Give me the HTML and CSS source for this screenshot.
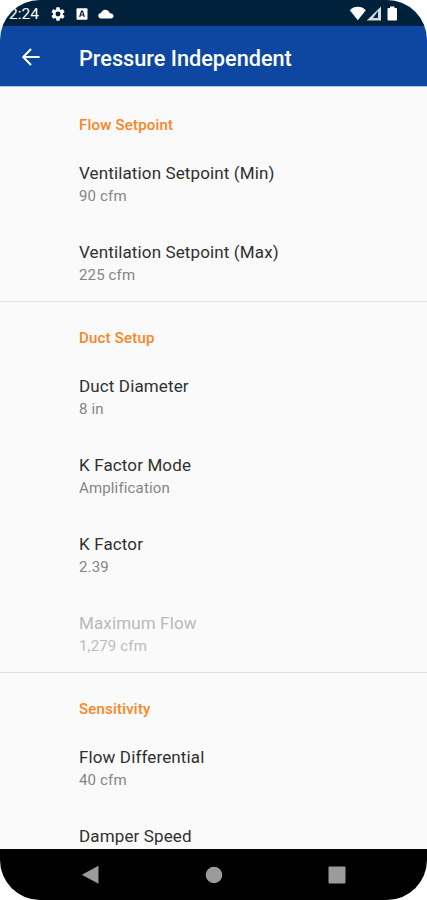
FILE: index.html
```html
<!DOCTYPE html>
<html lang="en">
<head>
<meta charset="utf-8">
<title>Pressure Independent</title>
<link rel="stylesheet" href="styles.css">
</head>
<body>
<div class="phone">
  <div class="status">
    <span class="clock">2:24</span>
    <svg class="gear" width="16" height="16" viewBox="0 0 24 24"><path fill="#fff" d="M19.43 12.98c.04-.32.07-.64.07-.98s-.03-.66-.07-.98l2.11-1.65c.19-.15.24-.42.12-.64l-2-3.46c-.12-.22-.39-.3-.61-.22l-2.49 1c-.52-.4-1.08-.73-1.69-.98l-.38-2.65A.49.49 0 0 0 14 2h-4c-.25 0-.46.18-.49.42l-.38 2.65c-.61.25-1.17.59-1.69.98l-2.49-1c-.23-.09-.49 0-.61.22l-2 3.46c-.13.22-.07.49.12.64l2.11 1.65c-.04.32-.07.65-.07.98s.03.66.07.98l-2.11 1.65c-.19.15-.24.42-.12.64l2 3.46c.12.22.39.3.61.22l2.49-1c.52.4 1.08.73 1.69.98l.38 2.65c.03.24.24.42.49.42h4c.25 0 .46-.18.49-.42l.38-2.65c.61-.25 1.17-.59 1.69-.98l2.49 1c.23.09.49 0 .61-.22l2-3.46c.12-.22.07-.49-.12-.64zM12 15.7a3.7 3.7 0 1 1 0-7.400 3.700 3.700 0 0 1 0 7.400z"/></svg>
    <svg class="keyboard" width="12" height="12" viewBox="0 0 12 12"><rect x=".5" y=".3" width="11" height="11.400" rx="1" fill="#fff"/><path d="M3.700 9 5.500 3.200h1L8.300 9M4.500 7h3" fill="none" stroke="#00213c" stroke-width="1.200"/></svg>
    <svg class="cloud" width="16" height="10" viewBox="0 0 16 10"><path fill="#fff" d="M3.600 9.500A3 3 0 0 1 .3 6.800 2.900 2.900 0 0 1 3 4 4.800 4.800 0 0 1 7.200.8a5 5 0 0 1 4.600 3.500c2.200-.1 3.700 1.100 3.700 2.700s-1.100 2.500-2.700 2.500z"/></svg>
    <svg class="signals" width="50" height="18" viewBox="0 0 50 18">
      <path fill="#fff" d="M.8 6.200C4.800 1.700 12.800 1.700 16.800 6.200L8.800 16.200z"/>
      <path fill="#d8dadd" d="M17.700 16.500 32 2.500v14z"/>
      <path fill="#00213c" d="m24 14 5-7v7z"/>
      <path fill="#fff" d="M38.500 5a1 1 0 0 1 1-1H41V2.500h4.500V4H47a1 1 0 0 1 1 1v10.500a1 1 0 0 1-1 1h-7.500a1 1 0 0 1-1-1z"/>
    </svg>
  </div>
  <header class="appbar">
    <svg class="back" width="20" height="20" viewBox="0 0 20 20"><path d="M18.500 10H2.500M10 2 2.200 10l7.800 8" fill="none" stroke="#fff" stroke-width="2"/></svg>
    <h1>Pressure Independent</h1>
  </header>
  <main>
    <section>
      <h2>Flow Setpoint</h2>
      <div class="item"><div class="name">Ventilation Setpoint (Min)</div><div class="value">90 cfm</div></div>
      <div class="item"><div class="name">Ventilation Setpoint (Max)</div><div class="value">225 cfm</div></div>
    </section>
    <section>
      <h2>Duct Setup</h2>
      <div class="item"><div class="name">Duct Diameter</div><div class="value">8 in</div></div>
      <div class="item"><div class="name">K Factor Mode</div><div class="value">Amplification</div></div>
      <div class="item"><div class="name">K Factor</div><div class="value">2.39</div></div>
      <div class="item disabled"><div class="name">Maximum Flow</div><div class="value">1,279 cfm</div></div>
    </section>
    <section>
      <h2>Sensitivity</h2>
      <div class="item"><div class="name">Flow Differential</div><div class="value">40 cfm</div></div>
      <div class="item"><div class="name">Damper Speed</div></div>
    </section>
  </main>
  <nav>
    <svg width="18" height="20" viewBox="0 0 18 20"><path fill="#9b9b9b" d="M17.500.8v18L.8 9.800z"/></svg>
    <svg width="18" height="18" viewBox="0 0 18 18"><circle cx="9" cy="9" r="8.300" fill="#9b9b9b"/></svg>
    <svg width="18" height="18" viewBox="0 0 18 18"><rect x=".5" y=".5" width="17" height="17" rx="1" fill="#9b9b9b"/></svg>
  </nav>
</div>
</body>
</html>
```
FILE: styles.css
```css
body {
  margin: 0;
  background: #fff;
  font-family: Roboto, "Liberation Sans", sans-serif;
}

.phone {
  width: 427px;
  height: 900px;
  display: flex;
  flex-direction: column;
  overflow: hidden;
  border-radius: 40px;
  background: #fafafa;
}

.status {
  flex: none;
  height: 26px;
  display: flex;
  align-items: center;
  background: #00213c;
  color: #fff;
}

.clock {
  width: 41px;
  padding: 1px 0 0 9px;
  box-sizing: border-box;
  font-size: 15.500px;
  line-height: 26px;
}

.gear {
  margin-left: 9px;
  margin-top: 1px;
}

.keyboard {
  margin-left: 10px;
  margin-top: 1px;
}

.cloud {
  margin-left: 10px;
  margin-top: 1px;
}

.signals {
  margin-left: auto;
  margin-right: 28px;
}

.appbar {
  flex: none;
  height: 61px;
  display: flex;
  align-items: center;
  background: #0d47a1;
  border-bottom: 1px solid #b9c4dc;
  box-sizing: border-box;
}

.back {
  margin: 2px 38px 0 21px;
}

h1 {
  margin: 5px 0 0;
  color: #fff;
  font-size: 21.700px;
  font-weight: 500;
  line-height: 28px;
  white-space: nowrap;
}

main {
  flex: none;
  height: 762px;
  overflow: hidden;
  padding-top: 1px;
  box-sizing: border-box;
}

section + section {
  border-top: 1px solid #e2e2e2;
}

h2 {
  height: 28px;
  margin: 0;
  padding: 27px 0 0 79px;
  color: #fb8524;
  font-size: 15px;
  font-weight: 500;
  line-height: 20px;
  letter-spacing: 0.2px;
}

section + section h2 {
  height: 28px;
  padding-top: 26px;
}

.item {
  height: 60px;
  padding: 19px 0 0 79px;
  white-space: nowrap;
}

.name {
  color: #303030;
  font-size: 17px;
  font-weight: 400;
  line-height: 23px;
  letter-spacing: 0.13px;
}

.value {
  color: #858585;
  font-size: 15px;
  line-height: 22px;
  letter-spacing: 0.15px;
}

.disabled .name {
  color: #b9b9b9;
}

.disabled .value {
  color: #bcbcbc;
}

nav {
  flex: none;
  height: 51px;
  display: grid;
  grid-template-columns: 18px 18px 18px;
  justify-content: center;
  column-gap: 105.500px;
  align-items: center;
  background: #000;
}
```
